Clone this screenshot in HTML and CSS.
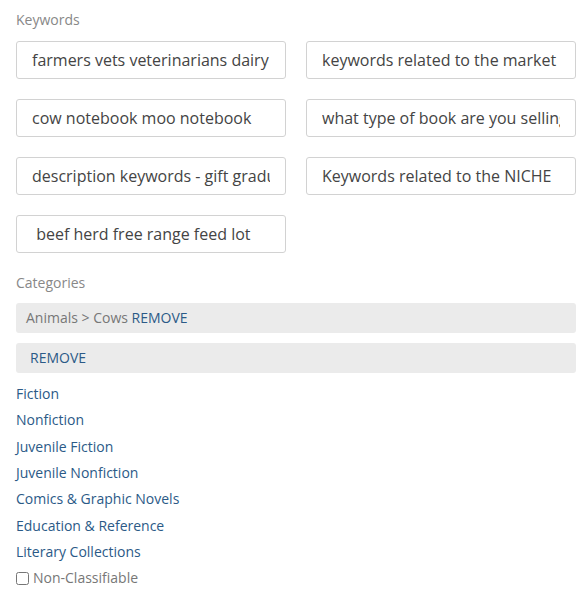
FILE: index.html
```html
<!DOCTYPE html>
<html>
<head>
<meta charset="utf-8">
<link rel="stylesheet" href="styles.css">
</head>
<body>
<div class="page">
  <div class="label">Keywords</div>
  <div class="kw-grid">
    <input class="kw" type="text" value="farmers vets veterinarians dairy">
    <input class="kw" type="text" value="keywords related to the market">
    <input class="kw" type="text" value="cow notebook moo notebook">
    <input class="kw" type="text" value="what type of book are you selling">
    <input class="kw" type="text" value="description keywords - gift graduation">
    <input class="kw" type="text" value="Keywords related to the NICHE">
    <input class="kw" type="text" value=" beef herd free range feed lot">
  </div>
  <div class="label cat-label">Categories</div>
  <div class="bar">Animals &gt; Cows <a class="link" href="#">REMOVE</a></div>
  <div class="bar bar-indent"><a class="link" href="#">REMOVE</a></div>
  <ul class="cats">
    <li><a class="link" href="#">Fiction</a></li>
    <li><a class="link" href="#">Nonfiction</a></li>
    <li><a class="link" href="#">Juvenile Fiction</a></li>
    <li><a class="link" href="#">Juvenile Nonfiction</a></li>
    <li><a class="link" href="#">Comics &amp; Graphic Novels</a></li>
    <li><a class="link" href="#">Education &amp; Reference</a></li>
    <li><a class="link" href="#">Literary Collections</a></li>
    <li class="check-row"><label class="check"><input type="checkbox" class="cb"> Non-Classifiable</label></li>
  </ul>
</div>
</body>
</html>
```

FILE: styles.css
```css
html, body {
  margin: 0;
  padding: 0;
  background: #ffffff;
}
body {
  font-family: "Open Sans", "Liberation Sans", sans-serif;
  font-size: 14px;
  color: #555;
}
.page {
  width: 560px;
  padding: 10px 16px 0 16px;
}
.label {
  color: #888;
  font-size: 14px;
  line-height: 20px;
}
.kw-grid {
  display: grid;
  grid-template-columns: 270px 270px;
  column-gap: 20px;
  row-gap: 20px;
  margin-top: 11px;
}
.kw {
  box-sizing: border-box;
  width: 270px;
  height: 38px;
  border: 1px solid #d2d2d2;
  border-radius: 3px;
  padding: 0 15px;
  font-family: "Open Sans", "Liberation Sans", sans-serif;
  font-size: 16px;
  color: #444;
  background: #fff;
  outline: none;
}
.cat-label {
  margin-top: 20px;
}
.bar {
  margin-top: 10px;
  height: 30px;
  line-height: 30px;
  background: #ebebeb;
  border-radius: 3px;
  padding: 0 10px;
  color: #777;
  font-size: 14px;
}
.bar-indent {
  padding-left: 14px;
}
.link {
  color: #2b5a87;
  text-decoration: none;
}
.cats {
  list-style: none;
  margin: 8px 0 0 0;
  padding: 0;
}
.cats li {
  line-height: 26.33px;
  font-size: 14px;
}
.check {
  color: #777;
  display: inline-flex;
  align-items: center;
}
.cb {
  margin: 0 4px 0 0;
  width: 13px;
  height: 13px;
}
```
